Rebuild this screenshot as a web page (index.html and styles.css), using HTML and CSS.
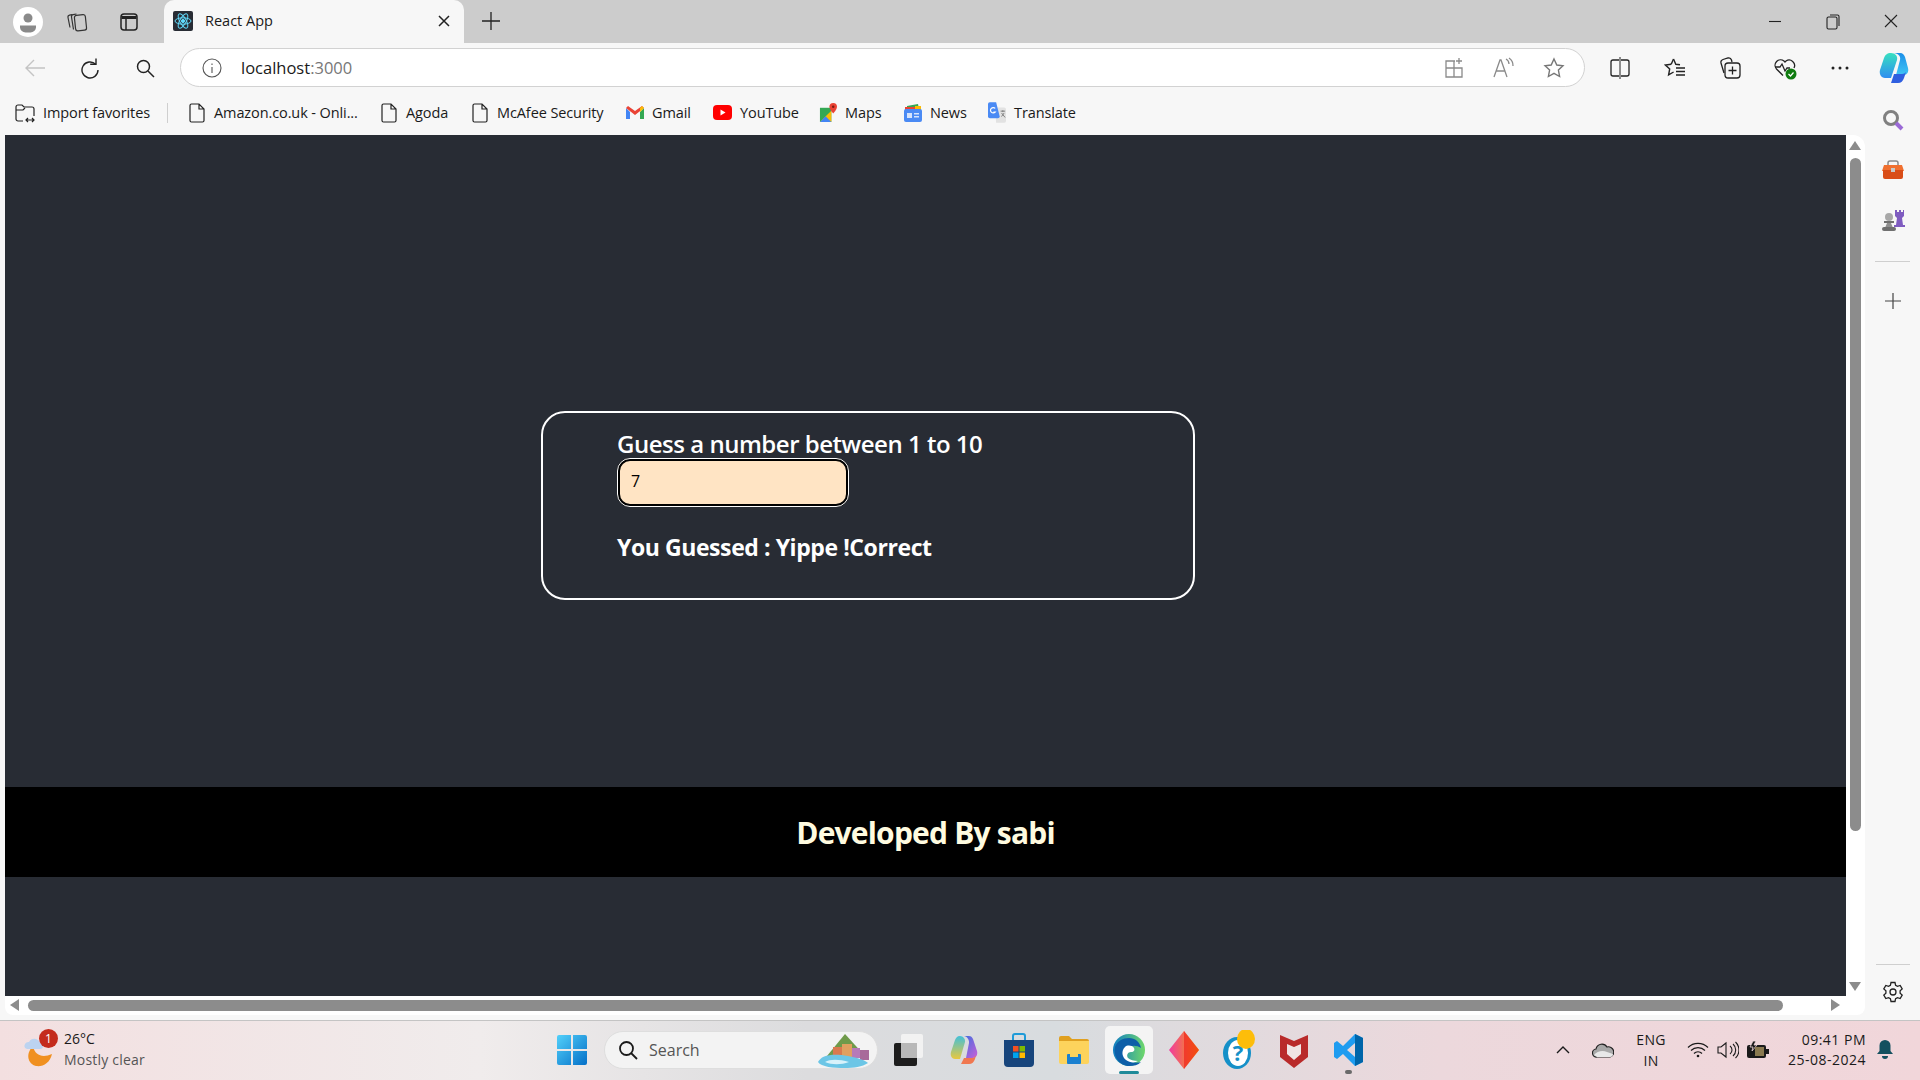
FILE: index.html
```html
<!DOCTYPE html>
<html>
    <head>
        <title>React App</title>
        <meta charset="UTF-8">
        <link rel="stylesheet" href="styles.css">
    </head>
    <body>
        <!-- browser title bar -->
        <div class="titlebar">
            <div class="profile">
                <svg width="30" height="30" viewBox="0 0 30 30"><circle cx="15" cy="15" r="15" fill="#fff"/><circle cx="15" cy="11" r="4.5" fill="#8a8a8a"/><path d="M7 18.5h16v2a5.5 5.5 0 0 1-5.5 5h-5a5.5 5.5 0 0 1-5.5-5z" fill="#8a8a8a"/></svg>
            </div>
            <div class="title-btn">
                <svg width="22" height="22" viewBox="0 0 22 22" fill="none" stroke="#333" stroke-width="1.2"><path d="M4 16.500L2 6.500a2 2 0 0 1 1.500-2.300L6 3.600"/><path d="M7.500 18.500L5.500 6a2 2 0 0 1 1.600-2.300L10.500 3"/><rect x="9" y="4" width="11" height="15.500" rx="2.200" transform="rotate(-6 14.500 12)"/></svg>
            </div>
            <div class="title-btn">
                <svg width="20" height="20" viewBox="0 0 20 20" fill="none" stroke="#222" stroke-width="1.500"><rect x="2" y="2" width="16" height="16" rx="3"/><path d="M2.500 5.500h15" stroke-width="3"/><path d="M7 6v12"/></svg>
            </div>
            <div class="tab">
                <svg class="favicon" width="20" height="20" viewBox="0 0 20 20" fill="none" stroke="#61dafb" stroke-width="1"><rect width="20" height="20" rx="2" fill="#282c34" stroke="none"/><ellipse cx="10" cy="10" rx="8" ry="3.200"/><ellipse cx="10" cy="10" rx="8" ry="3.200" transform="rotate(60 10 10)"/><ellipse cx="10" cy="10" rx="8" ry="3.200" transform="rotate(120 10 10)"/><circle cx="10" cy="10" r="1.600" fill="#61dafb"/></svg>
                <span class="tab-name">React App</span>
                <svg width="12" height="12" viewBox="0 0 12 12" stroke="#222" stroke-width="1.500"><path d="M1 1l10 10M11 1L1 11"/></svg>
            </div>
            <div class="new-tab">
                <svg width="18" height="18" viewBox="0 0 18 18" stroke="#222" stroke-width="1.300"><path d="M9 0v18M0 9h18"/></svg>
            </div>
            <div class="window-btns">
                <div class="win-btn"><svg width="14" height="14" viewBox="0 0 14 14" stroke="#222" stroke-width="1.100"><path d="M1 7.500h12"/></svg></div>
                <div class="win-btn"><svg width="14" height="16" viewBox="0 0 14 16" fill="none" stroke="#222" stroke-width="1.100"><rect x="1" y="3" width="10" height="12" rx="1.500"/><path d="M4 1h7.500A1.500 1.500 0 0 1 13 2.500V12"/></svg></div>
                <div class="win-btn"><svg width="14" height="14" viewBox="0 0 14 14" stroke="#222" stroke-width="1.100"><path d="M1 1l12 12M13 1L1 13"/></svg></div>
            </div>
        </div>

        <!-- address bar row -->
        <div class="toolbar">
            <div class="tool-btn"><svg width="22" height="20" viewBox="0 0 22 20" fill="none" stroke="#c4c4c4" stroke-width="1.400"><path d="M21 10H2M10 2l-8 8 8 8"/></svg></div>
            <div class="tool-btn"><svg width="22" height="22" viewBox="0 0 22 22" fill="none" stroke="#222" stroke-width="1.400"><path d="M17 1.500V7.300h-5.800"/><path d="M16.660 7.340A8 8 0 1 0 19 13"/></svg></div>
            <div class="tool-btn"><svg width="20" height="20" viewBox="0 0 20 20" fill="none" stroke="#222" stroke-width="1.500"><circle cx="8.500" cy="8.500" r="6"/><path d="M13 13l6 6"/></svg></div>
            <div class="addressbar">
                <svg class="info" width="20" height="20" viewBox="0 0 20 20" fill="none" stroke="#555" stroke-width="1.100"><circle cx="10" cy="10" r="9"/><path d="M10 9v6M10 5.500v1.500"/></svg>
                <span class="url">localhost<span class="port">:3000</span></span>
                <div class="addr-icons">
                    <div class="addr-btn"><svg width="20" height="22" viewBox="0 0 20 22" fill="none" stroke="#8a8a8a" stroke-width="1.300"><path d="M11 4H2v16h16v-9H2M10 4v16"/><path d="M15 1v6M12 4h6"/></svg></div>
                    <div class="addr-btn"><svg width="22" height="22" viewBox="0 0 22 22" fill="none" stroke="#8a8a8a" stroke-width="1.300"><path d="M1 20L7 3h1l6 17M3.500 14h9"/><path d="M13 2a6 6 0 0 1 3 5M16 1a9 9 0 0 1 4 8"/></svg></div>
                    <div class="addr-btn"><svg width="22" height="22" viewBox="0 0 22 22" fill="none" stroke="#777" stroke-width="1.400"><path d="M11 2l2.800 6 6.200.800-4.600 4.300 1.200 6.400L11 16.300l-5.600 3.200 1.200-6.400L2 8.800 8.200 8z"/></svg></div>
                </div>
            </div>
            <div class="tool-right">
                <div class="tool-btn"><svg width="20" height="24" viewBox="0 0 20 24" fill="none" stroke="#222" stroke-width="1.300"><path d="M9 4H3a2 2 0 0 0-2 2v12a2 2 0 0 0 2 2h6M11 4h6a2 2 0 0 1 2 2v12a2 2 0 0 1-2 2h-6"/><path d="M10 1v22" stroke-width="1"/></svg></div>
                <div class="tool-btn"><svg width="22" height="22" viewBox="0 0 22 22" fill="none" stroke="#222" stroke-width="1.400"><path d="M9.500 2l2.300 5.300 4.200.500M7.200 7.300L1.500 8.100l4.200 3.900-1.100 5.800 5-2.800"/><path d="M7.200 7.300L9.500 2"/><path d="M12 11h9M12 14.500h9M12 18h9"/></svg></div>
                <div class="tool-btn"><svg width="22" height="24" viewBox="0 0 22 24" fill="none" stroke="#222" stroke-width="1.300"><path d="M5 17L2 7a3 3 0 0 1 2-3.500L9 2a3 3 0 0 1 3.500 2l.5 2"/><rect x="6" y="7" width="15" height="15" rx="3"/><path d="M13.500 10.500v8M9.500 14.500h8"/></svg></div>
                <div class="tool-btn"><svg width="24" height="24" viewBox="0 0 24 24" fill="none" stroke="#222" stroke-width="1.300"><path d="M10 19.500L3.500 13A5.500 5.500 0 0 1 11 5l1 1 1-1a5.500 5.500 0 0 1 8 7"/><path d="M2 11h5l2-3 3 7 2-3h3"/><circle cx="18" cy="18" r="5.500" fill="#107c10" stroke="none"/><path d="M15.500 18l2 2 3-3.500" stroke="#fff" stroke-width="1.200"/></svg></div>
                <div class="tool-btn"><svg width="18" height="4" viewBox="0 0 18 4" fill="#222"><circle cx="2" cy="2" r="1.500"/><circle cx="9" cy="2" r="1.500"/><circle cx="16" cy="2" r="1.500"/></svg></div>
            </div>
            <div class="copilot">
                <svg width="30" height="32" viewBox="0 0 30 32"><defs><linearGradient id="cpa" x1="0" y1="0" x2="0" y2="1"><stop offset="0" stop-color="#37e0c0"/><stop offset="1" stop-color="#2f8ef0"/></linearGradient><linearGradient id="cpb" x1="0" y1="0" x2="0" y2="1"><stop offset="0" stop-color="#1c8fe8"/><stop offset="1" stop-color="#3fc5f5"/></linearGradient></defs><path d="M14 1h7c3 0 4 2 5 4l3 11c1 4-1 7-4 7h-8l4-15c1-3-1-7-7-7z" fill="url(#cpb)"/><path d="M12 1C8 1 6 3 5 6L1 18c-1 4 1 8 5 8h6l6-18c1-4-2-7-6-7z" fill="url(#cpa)"/><path d="M12 31h7c3 0 5-2 6-5l2-6c-1 1-2 2-4 2h-8z" fill="#2f5fe0"/></svg>
            </div>
        </div>

        <!-- favorites bar -->
        <div class="bookmarks">
            <div class="bm bm-tight"><svg width="20" height="20" viewBox="0 0 20 20" fill="none" stroke="#222" stroke-width="1.200"><path d="M8 18H3a2 2 0 0 1-2-2V4a2 2 0 0 1 2-2h4l2 2h8a2 2 0 0 1 2 2v7"/><path d="M1 7h7l2-2"/><path d="M11 17h8M13 15l-2 2 2 2M17 15l2 2-2 2"/></svg>Import favorites</div>
            <div class="bm-sep"></div>
            <div class="bm"><svg class="page-ic" width="16" height="20" viewBox="0 0 16 20"><path d="M2.500 1H10l5 5v11.500a1.500 1.500 0 0 1-1.500 1.500h-11A1.500 1.500 0 0 1 1 17.500v-15A1.500 1.500 0 0 1 2.500 1zM10 1v5h5"/></svg>Amazon.co.uk - Onli...</div>
            <div class="bm"><svg class="page-ic" width="16" height="20" viewBox="0 0 16 20"><path d="M2.500 1H10l5 5v11.500a1.500 1.500 0 0 1-1.500 1.500h-11A1.500 1.500 0 0 1 1 17.500v-15A1.500 1.500 0 0 1 2.500 1zM10 1v5h5"/></svg>Agoda</div>
            <div class="bm"><svg class="page-ic" width="16" height="20" viewBox="0 0 16 20"><path d="M2.500 1H10l5 5v11.500a1.500 1.500 0 0 1-1.500 1.500h-11A1.500 1.500 0 0 1 1 17.500v-15A1.500 1.500 0 0 1 2.500 1zM10 1v5h5"/></svg>McAfee Security</div>
            <div class="bm bm-tight"><svg width="18" height="14" viewBox="0 0 18 14"><path d="M0 2v11h4V6z" fill="#4285f4"/><path d="M14 6v7h4V2z" fill="#34a853"/><path d="M0 2l9 7 9-7-2-2-7 5-7-5z" fill="#ea4335"/><path d="M14 2l2-2 2 2-4 4z" fill="#fbbc04"/></svg>Gmail</div>
            <div class="bm bm-tight"><svg width="19" height="15" viewBox="0 0 19 15"><rect width="19" height="15" rx="4" fill="#f00"/><path d="M7.500 4.500l5 3-5 3z" fill="#fff"/></svg>YouTube</div>
            <div class="bm bm-tight"><svg width="18" height="20" viewBox="0 0 19 21"><path d="M1 5h12v15H1z" fill="#34a853"/><path d="M1 20L13 8v12z" fill="#fbbc04"/><path d="M1 20l6-6 6 6z" fill="#4285f4"/><path d="M15 0a4 4 0 0 1 4 4c0 3-4 7-4 7s-4-4-4-7a4 4 0 0 1 4-4z" fill="#ea4335"/><circle cx="15" cy="4" r="1.300" fill="#7a1c14"/></svg>Maps</div>
            <div class="bm bm-tight"><svg width="18" height="19" viewBox="0 0 18 19"><path d="M3 3l11-2 1 5H3z" fill="#34a853"/><path d="M1 4h10v4H1z" fill="#ea4335"/><path d="M11 3h6v5h-6z" fill="#fbbc04"/><rect y="6" width="18" height="13" rx="2" fill="#4a8af4"/><rect x="3" y="10" width="5" height="5" fill="#d5e3fc"/><path d="M10 10h5v1.500h-5zM10 13h5v1.500h-5z" fill="#d5e3fc"/></svg>News</div>
            <div class="bm bm-tight"><svg width="18" height="21" viewBox="0 0 20 23"><path d="M8 6h10a2 2 0 0 1 2 2v13a2 2 0 0 1-2 2H9z" fill="#e2e2e2"/><path d="M14 10h5M16.500 9v2M15 16l3-4M15 12l4 5" stroke="#777" fill="none"/><path d="M2 0h7l4 16a2 2 0 0 1-2 2H2a2 2 0 0 1-2-2V2a2 2 0 0 1 2-2z" fill="#4a8af4"/><path d="M8 7a3 3 0 1 0 0 4H6" fill="none" stroke="#fff" stroke-width="1.300"/></svg>Translate</div>
        </div>

        <div class="browser-body">
            <div class="frame">
                <div class="page">
                    <div class="card">
                        <h3 class="card-title">Guess a number between 1 to 10</h3>
                        <input class="guess" type="text" value="7">
                        <h3 class="card-result">You Guessed : Yippe !Correct</h3>
                    </div>
                    <div class="footer">Developed By sabi</div>
                </div>
                <div class="vscroll">
                    <div class="arrow-up"></div>
                    <div class="vthumb"></div>
                    <div class="arrow-down"></div>
                </div>
                <div class="hscroll">
                    <div class="arrow-left"></div>
                    <div class="hthumb"></div>
                    <div class="arrow-right"></div>
                </div>
            </div>
            <div class="sidebar">
                <div class="side-btn"><svg width="22" height="22" viewBox="0 0 22 22" fill="none"><circle cx="9" cy="9" r="6.500" stroke="#808080" stroke-width="3"/><path d="M14 14l6 6" stroke="#9b6ad6" stroke-width="4"/></svg></div>
                <div class="side-btn"><svg width="24" height="20" viewBox="0 0 24 20"><path d="M7 6V3a2 2 0 0 1 2-2h6a2 2 0 0 1 2 2v3" fill="none" stroke="#8a8a8a" stroke-width="1.500"/><path d="M3 5h18l2 6H1z" fill="#f07030"/><path d="M2 10h20v7a2 2 0 0 1-2 2H4a2 2 0 0 1-2-2z" fill="#d94d18"/><rect x="10" y="8" width="4" height="4" fill="#c8c8c8"/></svg></div>
                <div class="side-btn"><svg width="24" height="24" viewBox="0 0 24 24"><path d="M14 2h2v2h2V2h2v2h2V2h1v6l-2 2 1 7h2v2H13v-2h2l1-7-2-2z" fill="#7f5cc0"/><circle cx="8" cy="9" r="4" fill="#a8a8a8"/><path d="M3 13h10v2H3z" fill="#707070"/><path d="M6 15h4l2 5H4z" fill="#909090"/><rect x="1" y="19" width="14" height="4" rx="2" fill="#707070"/></svg></div>
                <div class="side-sep"></div>
                <div class="side-btn"><svg width="16" height="16" viewBox="0 0 16 16" stroke="#444" stroke-width="1.200"><path d="M8 0v16M0 8h16"/></svg></div>
                <div class="side-gear">
                    <svg width="22" height="22" viewBox="0 0 22 22" fill="none" stroke="#222" stroke-width="1.300"><circle cx="11" cy="11" r="3"/><path d="M9 1.500h4l.600 2.800 1.900 1.100 2.700-.900 2 3.400-2.100 1.900v2.400l2.100 1.900-2 3.400-2.700-.900-1.900 1.100-.600 2.800H9l-.600-2.800-1.900-1.100-2.700.900-2-3.400 2.100-1.900V9.800L1.800 7.900l2-3.400 2.700.900 1.900-1.100z"/></svg>
                </div>
            </div>
        </div>

        <!-- windows taskbar -->
        <div class="taskbar">
            <div class="weather">
                <div class="weather-ic">
                    <svg width="36" height="40" viewBox="0 0 36 40"><path d="M11 16c2 10 10 12 19 8-2 9-9 13-16 12C6 34 3 24 11 16z" fill="#f09020"/><path d="M3 18a4 4 0 0 1 4-6 6 6 0 0 1 11 1 3 3 0 0 1 0 6H5z" fill="#bcd3f0"/></svg>
                    <span class="weather-badge">1</span>
                </div>
                <div class="weather-text">
                    <div class="temp">26°C</div>
                    <div class="sky">Mostly clear</div>
                </div>
            </div>
            <div class="task-center">
                <div class="start"><svg width="30" height="30" viewBox="0 0 30 30"><defs><linearGradient id="wn" x1="0" y1="0" x2="1" y2="1"><stop offset="0" stop-color="#52d0fa"/><stop offset="1" stop-color="#0570c8"/></linearGradient></defs><path d="M0 2a2 2 0 0 1 2-2h12v14H0zM16 0h12a2 2 0 0 1 2 2v12H16zM0 16h14v14H2a2 2 0 0 1-2-2zM16 16h14v12a2 2 0 0 1-2 2H16z" fill="url(#wn)"/></svg></div>
                <div class="searchbox">
                    <svg width="20" height="20" viewBox="0 0 20 20" fill="none" stroke="#1a1a1a" stroke-width="1.800"><circle cx="8.500" cy="8.500" r="6.500"/><path d="M13 13l6 6"/></svg>
                    <span class="search-word">Search</span>
                    <svg class="search-art" width="58" height="36" viewBox="0 0 58 36"><path d="M10 24L28 2l20 22z" fill="#6f9a4a"/><rect x="16" y="15" width="9" height="11" fill="#d9794f"/><rect x="25" y="12" width="10" height="14" fill="#e0a060"/><rect x="35" y="16" width="8" height="10" fill="#b77ab8"/><rect x="43" y="18" width="9" height="10" fill="#a86a9a"/><path d="M1 30c3-7 15-9 30-6 10 2 17 4 20 7-6 4-14 5-24 5S4 35 1 30z" fill="#6cc6e6"/><path d="M8 30c5-3 14-3 24 0-8 3-17 3-24 0z" fill="#d8f2fa"/></svg>
                </div>
                <div class="task-ic"><svg width="30" height="32" viewBox="0 0 30 32"><rect x="7" y="0" width="22" height="24" rx="2" fill="#f2f2f2"/><rect x="0" y="9" width="23" height="23" rx="2" fill="#1d1d1d"/><rect x="7" y="9" width="16" height="15" fill="#b8b8b8"/></svg></div>
                <div class="task-ic"><svg width="28" height="30" viewBox="0 0 28 30"><defs><linearGradient id="tca" x1="0" y1="0" x2="0" y2="1"><stop offset="0" stop-color="#42c0d8"/><stop offset="1" stop-color="#e8c840"/></linearGradient><linearGradient id="tcb" x1="0" y1="0" x2="1" y2="1"><stop offset="0" stop-color="#2f6fe0"/><stop offset="1" stop-color="#c860d8"/></linearGradient></defs><path d="M10 1h9c2 0 3 1 4 3l4 12c1 4-1 7-4 7h-7l3-15c.500-3-2-7-5-7z" fill="url(#tcb)"/><path d="M10 1C7 1 6 3 5 5L1 17c-1 4 1 7 4 7h5l5-17c.500-3-2-6-5-6z" fill="url(#tca)"/><path d="M11 29h8c3 0 5-2 6-5l1-4c-1 2-2 3-4 3h-8z" fill="#f07850"/></svg></div>
                <div class="task-ic"><svg width="30" height="34" viewBox="0 0 30 34"><path d="M9 8V3a2 2 0 0 1 2-2h8a2 2 0 0 1 2 2v5" fill="none" stroke="#1f9bd8" stroke-width="2"/><path d="M0 7h30v23a4 4 0 0 1-4 4H4a4 4 0 0 1-4-4z" fill="#17457c"/><rect x="9" y="13" width="5.500" height="5.500" fill="#f25022"/><rect x="15.500" y="13" width="5.500" height="5.500" fill="#7fba00"/><rect x="9" y="19.500" width="5.500" height="5.500" fill="#00a4ef"/><rect x="15.500" y="19.500" width="5.500" height="5.500" fill="#ffb900"/></svg></div>
                <div class="task-ic"><svg width="30" height="28" viewBox="0 0 30 28"><path d="M0 2a2 2 0 0 1 2-2h8l3 3h15a2 2 0 0 1 2 2v4H0z" fill="#e0a020"/><path d="M0 5h30v21a2 2 0 0 1-2 2H2a2 2 0 0 1-2-2z" fill="#fdd35c"/><rect x="8" y="18" width="14" height="10" rx="1" fill="#1a80d0"/><rect x="11" y="18" width="8" height="3" fill="#fdd35c"/></svg></div>
                <div class="task-ic">
                    <div class="task-active">
                        <svg width="32" height="32" viewBox="0 0 32 32"><defs><linearGradient id="edg" x1="0" y1="0" x2="1" y2="0"><stop offset="0" stop-color="#0f7dc4"/><stop offset="1" stop-color="#6fd86a"/></linearGradient></defs><circle cx="16" cy="16" r="16" fill="url(#edg)"/><path d="M2 13C4 7 10 4 16 4c6 0 11 4 12 10-5-3-10-3-14 1-3 3-2 9 3 12 3 2 8 2 11 1-3 3-7 4-12 4C7 32 0 23 2 13z" fill="#0d5ea8"/><path d="M13 26c-4-3-5-9-1-13 2-2 7-2 9 1 1 2 0 4-3 4-3 0-5 3-3 6 2 2 6 3 10 3-3 2-8 2-12-1z" fill="#fff"/></svg>
                        <span class="active-bar"></span>
                    </div>
                </div>
                <div class="task-ic"><svg width="30" height="38" viewBox="0 0 30 38"><defs><linearGradient id="dmd" x1="0" y1="0" x2="1" y2="0"><stop offset="0" stop-color="#f03ca0"/><stop offset="1" stop-color="#f5a000"/></linearGradient></defs><path d="M15 0l15 19-15 19L0 19z" fill="url(#dmd)"/><path d="M15 0l15 19-15 19z" fill="#f01818" opacity=".6"/></svg></div>
                <div class="task-ic"><svg width="34" height="40" viewBox="0 0 34 40"><ellipse cx="15" cy="23" rx="14" ry="16" fill="#1590c8"/><ellipse cx="16" cy="23" rx="10" ry="13" fill="#fff"/><text class="help-mark" x="16" y="31">?</text><ellipse cx="24" cy="9" rx="9" ry="10" fill="#fdbd0a"/></svg></div>
                <div class="task-ic"><svg width="28" height="36" viewBox="0 0 28 36"><path d="M0 3l14 6 14-6v22L14 36 0 25z" fill="#b92a2a"/><path d="M7 12l7 3 7-3v10l-7 6-7-6z" fill="#f0e4e4"/></svg></div>
                <div class="task-ic">
                    <svg width="30" height="32" viewBox="0 0 30 32"><path d="M21 0l8 4v24l-8 4-12-12-6 5-3-2V9l3-2 6 5zM21 9l-8 7 8 7z" fill="#1f9cf0"/><path d="M21 0l8 4v24l-8 4z" fill="#0065a9"/></svg>
                    <span class="dot"></span>
                </div>
            </div>
            <div class="tray">
                <div class="tray-ic"><svg width="14" height="8" viewBox="0 0 14 8" fill="none" stroke="#1a1a1a" stroke-width="1.400"><path d="M1 7l6-6 6 6"/></svg></div>
                <div class="tray-ic tray-cloud"><svg width="22" height="16" viewBox="0 0 22 16" stroke="#222" stroke-width="1.200"><path d="M5 15a4 4 0 0 1-1-8 6 6 0 0 1 11-2 5 5 0 0 1 3 10z" fill="#a8a8a8"/><path d="M2 13c3-4 9-5 13-3l6 2c0 2-1 3-3 3H5z" fill="#e8e8e8" stroke="none"/></svg></div>
                <div class="lang">ENG<br>IN</div>
                <div class="tray-ic tray-wifi"><svg width="22" height="16" viewBox="0 0 22 16" fill="none" stroke="#1a1a1a" stroke-width="1.200"><path d="M1 5.500a14 14 0 0 1 20 0M4 8.500a10 10 0 0 1 14 0M7 11.500a5.500 5.500 0 0 1 8 0"/><circle cx="11" cy="14" r="1.300" fill="#1a1a1a" stroke="none"/></svg></div>
                <div class="tray-ic tray-vol"><svg width="22" height="18" viewBox="0 0 22 18" fill="none" stroke="#1a1a1a" stroke-width="1.100"><path d="M1 6h3l5-4v14l-5-4H1zM13 5a5 5 0 0 1 0 8M16 3a8 8 0 0 1 0 12M18.500 1a11 11 0 0 1 0 16"/></svg></div>
                <div class="tray-ic tray-batt"><svg width="22" height="18" viewBox="0 0 22 18"><rect x="0" y="4" width="19" height="13" rx="2" fill="#1a1a1a"/><rect x="19" y="8" width="3" height="5" fill="#1a1a1a"/><path d="M6 0L3 6h3L5 10l5-6H7l2-4z" fill="#1a1a1a" stroke="#f0d8dc" stroke-width=".8"/><rect x="8" y="6" width="9" height="9" fill="#8a7a50"/></svg></div>
                <div class="clock">
                    <div>09:41 PM</div>
                    <div>25-08-2024</div>
                </div>
                <div class="tray-ic tray-bell"><svg width="16" height="20" viewBox="0 0 16 20" fill="#14505f"><path d="M8 0a5.500 5.500 0 0 1 5.500 5.500V11l2.500 3H0l2.500-3V5.500A5.500 5.500 0 0 1 8 0z"/><path d="M5 16h6a3 3 0 0 1-6 0z"/></svg></div>
            </div>
        </div>
    </body>
</html>
```

FILE: styles.css
```css
html, body {
    margin: 0;
    height: 1080px;
    overflow: hidden;
}
body {
    display: flex;
    flex-direction: column;
    font-family: "Open Sans", "Liberation Sans", sans-serif;
    color: #1a1a1a;
    background-color: #f7f7f7;
}

/* title bar */
.titlebar {
    height: 43px;
    display: flex;
    align-items: center;
    background-color: #cccccc;
    padding-left: 13px;
}
.profile {
    width: 30px;
    height: 30px;
    margin-right: 8px;
}
.title-btn {
    width: 52px;
    display: flex;
    justify-content: center;
}
.tab {
    width: 300px;
    height: 43px;
    box-sizing: border-box;
    align-self: flex-end;
    margin-left: 9px;
    display: flex;
    align-items: center;
    padding: 0 14px 2px 9px;
    background-color: #f7f7f7;
    border-radius: 10px 10px 0 0;
    font-size: 14.500px;
}
.favicon {
    margin-right: 12px;
}
.tab-name {
    flex: 1;
}
.new-tab {
    margin-left: 18px;
    padding-bottom: 2px;
    display: flex;
}
.window-btns {
    margin-left: auto;
    display: flex;
}
.win-btn {
    width: 58px;
    display: flex;
    justify-content: center;
}

/* address bar */
.toolbar {
    height: 47px;
    box-sizing: border-box;
    display: flex;
    align-items: center;
    padding: 2px 0 0 7px;
}
.tool-btn {
    width: 55px;
    height: 40px;
    flex: none;
    display: flex;
    align-items: center;
    justify-content: center;
}
.addressbar {
    flex: 1;
    height: 39px;
    box-sizing: border-box;
    margin-left: 8px;
    display: flex;
    align-items: center;
    background-color: #ffffff;
    border: 1px solid #d2d2d2;
    border-radius: 20px;
    padding-left: 21px;
}
.url {
    margin-left: 19px;
    font-size: 16.500px;
}
.port {
    color: #777777;
}
.addr-icons {
    margin-left: auto;
    display: flex;
    padding-right: 5px;
}
.addr-btn {
    width: 50px;
    display: flex;
    justify-content: center;
}
.tool-right {
    display: flex;
    margin-left: 7px;
}
.copilot {
    width: 53px;
    flex: none;
    display: flex;
    justify-content: center;
}

/* favorites */
.bookmarks {
    height: 45px;
    box-sizing: border-box;
    padding-left: 15px;
    display: grid;
    grid-template-columns: 152px 22px 192px 91px 154px 87px 106px 85px 84px auto;
    align-items: center;
    font-size: 14.500px;
    letter-spacing: -0.1px;
}
.bm {
    display: flex;
    align-items: center;
    gap: 9px;
    white-space: nowrap;
}
.bm-tight {
    gap: 8px;
}
.bm-sep {
    width: 1px;
    height: 20px;
    background-color: #cfcfcf;
}
.page-ic {
    fill: none;
    stroke: #222222;
    stroke-width: 1.200;
}

/* main area */
.browser-body {
    height: 885px;
    display: flex;
}
.frame {
    margin-left: 5px;
    flex: 1;
    height: 880px;
    display: grid;
    grid-template-columns: 1fr 19px;
    grid-template-rows: 861px 19px;
    background-color: #ffffff;
    border-radius: 0 12px 8px 8px;
    overflow: hidden;
}
.page {
    background-color: #282c34;
    padding-top: 276px;
    overflow: hidden;
}
.card {
    width: 654px;
    height: 189px;
    box-sizing: border-box;
    margin-left: 536px;
    border: 2px solid #ffffff;
    border-radius: 24px;
    padding-left: 74px;
    color: #ffffff;
}
.card-title {
    margin: 16px 0 0;
    height: 29px;
    font-size: 24px;
    line-height: 29px;
    font-weight: 600;
    letter-spacing: -0.48px;
}
.guess {
    display: block;
    width: 232px;
    height: 49px;
    box-sizing: border-box;
    border: 3px solid #000000;
    outline: 1px solid #ffffff;
    outline-offset: -1px;
    border-radius: 13px;
    background-color: #ffe4c4;
    padding: 0 11px 3px;
    font-family: "Open Sans", sans-serif;
    font-size: 16px;
    color: #000000;
}
.card-result {
    margin: 25px 0 0;
    font-size: 23px;
    line-height: 30px;
    font-weight: 700;
    letter-spacing: -0.42px;
}
.footer {
    height: 90px;
    margin-top: 187px;
    display: flex;
    align-items: center;
    justify-content: center;
    background-color: #000000;
    color: #fffbe0;
    font-size: 30px;
    font-weight: 700;
    letter-spacing: -0.8px;
}

/* scrollbars */
.vscroll {
    position: relative;
}
.vthumb {
    position: absolute;
    top: 23px;
    left: 4px;
    width: 11px;
    height: 673px;
    background-color: #8c8c8c;
    border-radius: 6px;
}
.arrow-up, .arrow-down, .arrow-left, .arrow-right {
    position: absolute;
    width: 0;
    height: 0;
    border-style: solid;
    border-color: transparent;
}
.arrow-up {
    top: 6px;
    left: 3px;
    border-width: 0 6.500px 9px;
    border-bottom-color: #8c8c8c;
}
.arrow-down {
    bottom: 5px;
    left: 3px;
    border-width: 9px 6.500px 0;
    border-top-color: #8c8c8c;
}
.hscroll {
    grid-column: 1 / 3;
    position: relative;
}
.hthumb {
    position: absolute;
    top: 4px;
    left: 23px;
    width: 1755px;
    height: 11px;
    background-color: #8c8c8c;
    border-radius: 6px;
}
.arrow-left {
    top: 3px;
    left: 5px;
    border-width: 6.500px 9px 6.500px 0;
    border-right-color: #8c8c8c;
}
.arrow-right {
    top: 3px;
    left: 1826px;
    border-width: 6.500px 0 6.500px 9px;
    border-left-color: #8c8c8c;
}

/* edge sidebar, starts up beside the favorites bar */
.sidebar {
    width: 55px;
    height: 930px;
    flex: none;
    margin-top: -45px;
    display: flex;
    flex-direction: column;
    align-items: center;
    padding: 5px 0 17px;
    box-sizing: border-box;
}
.side-btn {
    height: 50px;
    display: flex;
    align-items: center;
    justify-content: center;
}
.side-sep {
    width: 35px;
    height: 1px;
    margin: 16px 0 14px;
    background-color: #cfcfcf;
}
.side-gear {
    margin-top: auto;
    display: flex;
    border-top: 1px solid #cfcfcf;
    padding: 16px 6px 0;
}

/* taskbar */
.taskbar {
    height: 60px;
    box-sizing: border-box;
    display: flex;
    align-items: center;
    padding-bottom: 2px;
    border-top: 1px solid #c4c4c4;
    background: linear-gradient(90deg, #f3dfe0 0%, #f0ecec 25%, #dcdcde 42%, #d8dcdf 55%, #ecd8dc 75%, #f1d6da 100%);
}
.weather {
    width: 538px;
    flex: none;
    display: flex;
    align-items: center;
    padding-left: 22px;
    box-sizing: border-box;
}
.weather-ic {
    position: relative;
    width: 42px;
    height: 40px;
}
.weather-badge {
    position: absolute;
    top: -1px;
    left: 17px;
    width: 19px;
    height: 19px;
    border-radius: 50%;
    background-color: #c42b1c;
    color: #ffffff;
    font-size: 12px;
    line-height: 19px;
    text-align: center;
}
.temp {
    font-size: 14px;
    line-height: 20px;
}
.sky {
    font-size: 14px;
    letter-spacing: 0.2px;
    line-height: 21px;
    color: #555555;
}
.task-center {
    display: flex;
    align-items: center;
    flex: none;
}
.start {
    width: 66px;
    padding-left: 2px;
    box-sizing: border-box;
    display: flex;
    justify-content: center;
}
.searchbox {
    width: 274px;
    height: 38px;
    box-sizing: border-box;
    display: flex;
    align-items: center;
    padding: 0 2px 0 13px;
    background-color: #f3f3f3;
    border: 1px solid #dedede;
    border-radius: 19px;
    margin-right: 3px;
}
.search-word {
    margin-left: 11px;
    font-size: 16px;
    color: #555555;
}
.search-art {
    margin-left: auto;
}
.task-ic {
    width: 55px;
    height: 48px;
    display: flex;
    align-items: center;
    justify-content: center;
    position: relative;
}
.task-active {
    width: 48px;
    height: 48px;
    display: flex;
    align-items: center;
    justify-content: center;
    position: relative;
    background-color: #f4f4f4;
    border-radius: 5px;
}
.active-bar {
    position: absolute;
    bottom: 0;
    left: 14px;
    width: 20px;
    height: 3px;
    border-radius: 2px;
    background-color: #1f8a99;
}
.dot {
    position: absolute;
    bottom: 0;
    left: 24px;
    width: 7px;
    height: 4px;
    border-radius: 2px;
    background-color: #6a6a6a;
}
.help-mark {
    font-family: "Open Sans", sans-serif;
    font-size: 22px;
    font-weight: 700;
    fill: #1590c8;
    text-anchor: middle;
}
.tray {
    flex: 1;
    display: flex;
    align-items: center;
    padding-left: 176px;
    font-size: 14px;
}
.tray-ic {
    display: flex;
    justify-content: center;
    width: 22px;
}
.tray-cloud {
    margin-left: 18px;
}
.lang {
    width: 50px;
    margin-left: 12px;
    text-align: center;
    line-height: 21px;
    font-size: 14px;
    letter-spacing: 0.3px;
}
.tray-wifi {
    margin-left: 11px;
}
.tray-vol {
    margin-left: 8px;
}
.tray-batt {
    margin-left: 8px;
}
.clock {
    width: 90px;
    margin-left: 7px;
    text-align: right;
    line-height: 20px;
    font-size: 14px;
    letter-spacing: 0.5px;
}
.tray-bell {
    margin-left: 8px;
}
```
